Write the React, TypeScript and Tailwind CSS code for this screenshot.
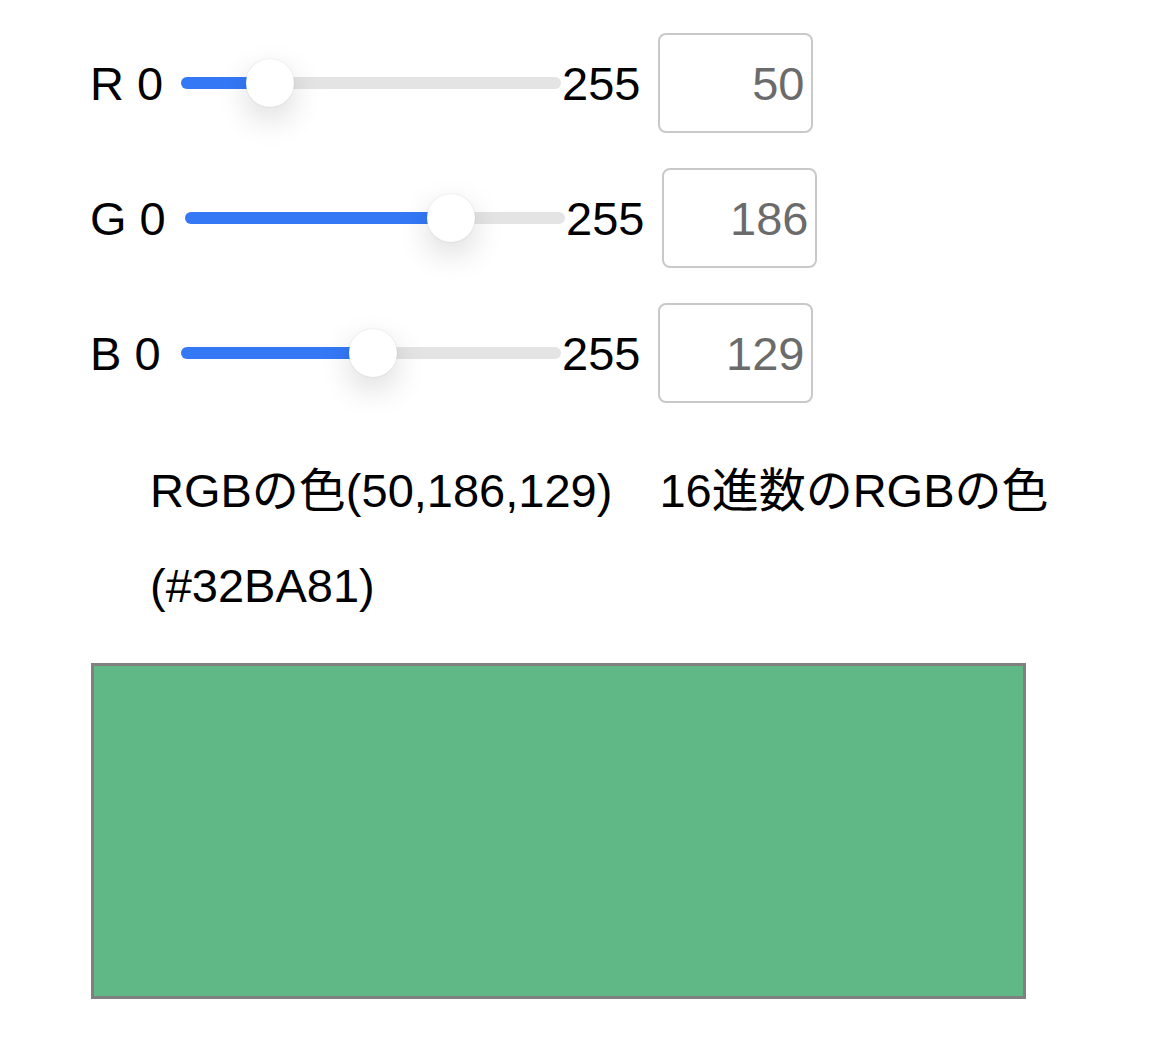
import React from "react";

const font = "font-['Liberation_Sans','Noto_Sans_CJK_JP',sans-serif]";

type Channel = { name: string; value: number; labelW: string };

const channels: Channel[] = [
  { name: "R", value: 50, labelW: "w-[73px]" },
  { name: "G", value: 186, labelW: "w-[77px]" },
  { name: "B", value: 129, labelW: "w-[73px]" },
];

function Slider({ value }: { value: number }) {
  // thumb travels across the track minus its own width
  const travel = 380 - 48;
  const left = (value / 255) * travel;
  return (
    <div className="relative ml-[18px] flex h-[48px] w-[380px] items-center">
      <div className="relative h-[12px] w-full rounded-full bg-[#e4e4e4]">
        <div
          className="absolute left-0 top-0 h-full rounded-full bg-[#3478f6]"
          style={{ width: left + 24 }}
        />
      </div>
      <div
        className="absolute top-0 h-[48px] w-[48px] rounded-full bg-white shadow-[0_12px_32px_rgba(0,0,0,0.15),0_0_2px_rgba(0,0,0,0.12)]"
        style={{ left }}
      />
    </div>
  );
}

function Row({ ch }: { ch: Channel }) {
  return (
    <div className="flex h-[100px] items-center text-[47px] leading-none text-black">
      <span className={`whitespace-pre ${ch.labelW}`}>{ch.name} 0</span>
      <Slider value={ch.value} />
      <span className="ml-[1px]">255</span>
      <div className="ml-[18px] flex h-[100px] w-[155px] items-center justify-end rounded-[8px] border-[2.5px] border-[#c9c9c9] pr-[7px] text-[#6b6b6b]">
        {ch.value}
      </div>
    </div>
  );
}

export default function App() {
  return (
    <div className={`${font} min-h-[1055px] bg-white pl-[90px] pt-[33px]`}>
      <div className="flex flex-col gap-[35px]">
        {channels.map((ch) => (
          <Row key={ch.name} ch={ch} />
        ))}
      </div>
      <p className="mt-[40px] pl-[60px] text-[47px] leading-[95px] text-black">
        RGBの色(50,186,129)　16進数のRGBの色
        <br />
        (#32BA81)
      </p>
      <div className="ml-[1px] mt-[30px] h-[336px] w-[935px] border-[3px] border-[#808080] bg-[#60b886]" />
    </div>
  );
}
